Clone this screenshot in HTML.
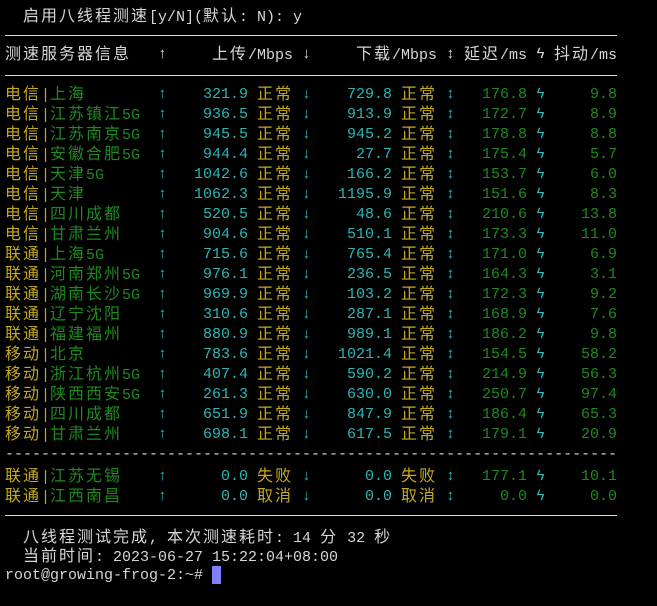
<!DOCTYPE html>
<html><head><meta charset="utf-8"><style>
html,body{margin:0;padding:0;background:#000;}
body{width:657px;height:606px;position:relative;overflow:hidden;font-family:"Liberation Mono","DejaVu Sans Mono","Noto Sans CJK SC",monospace;font-size:15px;color:#d6d6d6;}
.l{position:absolute;left:0;height:20px;line-height:20px;width:657px;white-space:pre;}
.l span{position:absolute;top:2px;}
.l span.z{top:-1px}
.l span.n0,.l span.m{top:-1px}
.z{font-family:"Noto Sans CJK SC","WenQuanYi Zen Hei",sans-serif;font-size:16px;letter-spacing:2px;}
.l span.in{position:static;}
.y{color:#c4aa1c}.g{color:#1e8a1e}.c{color:#2cb6b6}
.n0{left:5px}
.a1{left:158px}.u{left:167px;width:81px;text-align:right}.s1{left:257px}
.a2{left:302px}.d{left:311px;width:81px;text-align:right}.s2{left:401px}
.a3{left:446px}.la{left:455px;width:72px;text-align:right}.a4{left:536px}.j{left:545px;width:72px;text-align:right}
.rule{position:absolute;left:5px;width:612px;height:1px;background:#d8d8d8;}
</style></head><body>
<div class="l" style="top:5px"><span class="m" style="left:23px"><span class="in z">启用八线程测速</span>[y/N](<span class="in z">默认</span>: N): y</span></div>
<div class="rule" style="top:35px"></div>
<div class="l" style="top:43px">
<span class="n0 z">测速服务器信息</span><span class="a1">↑</span>
<span class="m" style="left:212px"><span class="in z">上传</span>/Mbps</span><span class="a2">↓</span>
<span class="m" style="left:356px"><span class="in z">下载</span>/Mbps</span><span class="a3">↕</span>
<span class="m" style="left:464px"><span class="in z">延迟</span>/ms</span><span class="a4">ϟ</span>
<span class="m" style="left:554px"><span class="in z">抖动</span>/ms</span></div>
<div class="rule" style="top:75px"></div>

<div class="l" style="top:83px"><span class="n0"><span class="in z y">电信</span><span class="in y">|</span><span class="in z g">上海</span></span><span class="a1 c">↑</span><span class="u c">321.9</span><span class="s1 z y">正常</span><span class="a2 c">↓</span><span class="d c">729.8</span><span class="s2 z y">正常</span><span class="a3 c">↕</span><span class="la g">176.8</span><span class="a4 c">ϟ</span><span class="j g">9.8</span></div>
<div class="l" style="top:103px"><span class="n0"><span class="in z y">电信</span><span class="in y">|</span><span class="in z g">江苏镇江</span><span class="in g">5G</span></span><span class="a1 c">↑</span><span class="u c">936.5</span><span class="s1 z y">正常</span><span class="a2 c">↓</span><span class="d c">913.9</span><span class="s2 z y">正常</span><span class="a3 c">↕</span><span class="la g">172.7</span><span class="a4 c">ϟ</span><span class="j g">8.9</span></div>
<div class="l" style="top:123px"><span class="n0"><span class="in z y">电信</span><span class="in y">|</span><span class="in z g">江苏南京</span><span class="in g">5G</span></span><span class="a1 c">↑</span><span class="u c">945.5</span><span class="s1 z y">正常</span><span class="a2 c">↓</span><span class="d c">945.2</span><span class="s2 z y">正常</span><span class="a3 c">↕</span><span class="la g">178.8</span><span class="a4 c">ϟ</span><span class="j g">8.8</span></div>
<div class="l" style="top:143px"><span class="n0"><span class="in z y">电信</span><span class="in y">|</span><span class="in z g">安徽合肥</span><span class="in g">5G</span></span><span class="a1 c">↑</span><span class="u c">944.4</span><span class="s1 z y">正常</span><span class="a2 c">↓</span><span class="d c">27.7</span><span class="s2 z y">正常</span><span class="a3 c">↕</span><span class="la g">175.4</span><span class="a4 c">ϟ</span><span class="j g">5.7</span></div>
<div class="l" style="top:163px"><span class="n0"><span class="in z y">电信</span><span class="in y">|</span><span class="in z g">天津</span><span class="in g">5G</span></span><span class="a1 c">↑</span><span class="u c">1042.6</span><span class="s1 z y">正常</span><span class="a2 c">↓</span><span class="d c">166.2</span><span class="s2 z y">正常</span><span class="a3 c">↕</span><span class="la g">153.7</span><span class="a4 c">ϟ</span><span class="j g">6.0</span></div>
<div class="l" style="top:183px"><span class="n0"><span class="in z y">电信</span><span class="in y">|</span><span class="in z g">天津</span></span><span class="a1 c">↑</span><span class="u c">1062.3</span><span class="s1 z y">正常</span><span class="a2 c">↓</span><span class="d c">1195.9</span><span class="s2 z y">正常</span><span class="a3 c">↕</span><span class="la g">151.6</span><span class="a4 c">ϟ</span><span class="j g">8.3</span></div>
<div class="l" style="top:203px"><span class="n0"><span class="in z y">电信</span><span class="in y">|</span><span class="in z g">四川成都</span></span><span class="a1 c">↑</span><span class="u c">520.5</span><span class="s1 z y">正常</span><span class="a2 c">↓</span><span class="d c">48.6</span><span class="s2 z y">正常</span><span class="a3 c">↕</span><span class="la g">210.6</span><span class="a4 c">ϟ</span><span class="j g">13.8</span></div>
<div class="l" style="top:223px"><span class="n0"><span class="in z y">电信</span><span class="in y">|</span><span class="in z g">甘肃兰州</span></span><span class="a1 c">↑</span><span class="u c">904.6</span><span class="s1 z y">正常</span><span class="a2 c">↓</span><span class="d c">510.1</span><span class="s2 z y">正常</span><span class="a3 c">↕</span><span class="la g">173.3</span><span class="a4 c">ϟ</span><span class="j g">11.0</span></div>
<div class="l" style="top:243px"><span class="n0"><span class="in z y">联通</span><span class="in y">|</span><span class="in z g">上海</span><span class="in g">5G</span></span><span class="a1 c">↑</span><span class="u c">715.6</span><span class="s1 z y">正常</span><span class="a2 c">↓</span><span class="d c">765.4</span><span class="s2 z y">正常</span><span class="a3 c">↕</span><span class="la g">171.0</span><span class="a4 c">ϟ</span><span class="j g">6.9</span></div>
<div class="l" style="top:263px"><span class="n0"><span class="in z y">联通</span><span class="in y">|</span><span class="in z g">河南郑州</span><span class="in g">5G</span></span><span class="a1 c">↑</span><span class="u c">976.1</span><span class="s1 z y">正常</span><span class="a2 c">↓</span><span class="d c">236.5</span><span class="s2 z y">正常</span><span class="a3 c">↕</span><span class="la g">164.3</span><span class="a4 c">ϟ</span><span class="j g">3.1</span></div>
<div class="l" style="top:283px"><span class="n0"><span class="in z y">联通</span><span class="in y">|</span><span class="in z g">湖南长沙</span><span class="in g">5G</span></span><span class="a1 c">↑</span><span class="u c">969.9</span><span class="s1 z y">正常</span><span class="a2 c">↓</span><span class="d c">103.2</span><span class="s2 z y">正常</span><span class="a3 c">↕</span><span class="la g">172.3</span><span class="a4 c">ϟ</span><span class="j g">9.2</span></div>
<div class="l" style="top:303px"><span class="n0"><span class="in z y">联通</span><span class="in y">|</span><span class="in z g">辽宁沈阳</span></span><span class="a1 c">↑</span><span class="u c">310.6</span><span class="s1 z y">正常</span><span class="a2 c">↓</span><span class="d c">287.1</span><span class="s2 z y">正常</span><span class="a3 c">↕</span><span class="la g">168.9</span><span class="a4 c">ϟ</span><span class="j g">7.6</span></div>
<div class="l" style="top:323px"><span class="n0"><span class="in z y">联通</span><span class="in y">|</span><span class="in z g">福建福州</span></span><span class="a1 c">↑</span><span class="u c">880.9</span><span class="s1 z y">正常</span><span class="a2 c">↓</span><span class="d c">989.1</span><span class="s2 z y">正常</span><span class="a3 c">↕</span><span class="la g">186.2</span><span class="a4 c">ϟ</span><span class="j g">9.8</span></div>
<div class="l" style="top:343px"><span class="n0"><span class="in z y">移动</span><span class="in y">|</span><span class="in z g">北京</span></span><span class="a1 c">↑</span><span class="u c">783.6</span><span class="s1 z y">正常</span><span class="a2 c">↓</span><span class="d c">1021.4</span><span class="s2 z y">正常</span><span class="a3 c">↕</span><span class="la g">154.5</span><span class="a4 c">ϟ</span><span class="j g">58.2</span></div>
<div class="l" style="top:363px"><span class="n0"><span class="in z y">移动</span><span class="in y">|</span><span class="in z g">浙江杭州</span><span class="in g">5G</span></span><span class="a1 c">↑</span><span class="u c">407.4</span><span class="s1 z y">正常</span><span class="a2 c">↓</span><span class="d c">590.2</span><span class="s2 z y">正常</span><span class="a3 c">↕</span><span class="la g">214.9</span><span class="a4 c">ϟ</span><span class="j g">56.3</span></div>
<div class="l" style="top:383px"><span class="n0"><span class="in z y">移动</span><span class="in y">|</span><span class="in z g">陕西西安</span><span class="in g">5G</span></span><span class="a1 c">↑</span><span class="u c">261.3</span><span class="s1 z y">正常</span><span class="a2 c">↓</span><span class="d c">630.0</span><span class="s2 z y">正常</span><span class="a3 c">↕</span><span class="la g">250.7</span><span class="a4 c">ϟ</span><span class="j g">97.4</span></div>
<div class="l" style="top:403px"><span class="n0"><span class="in z y">移动</span><span class="in y">|</span><span class="in z g">四川成都</span></span><span class="a1 c">↑</span><span class="u c">651.9</span><span class="s1 z y">正常</span><span class="a2 c">↓</span><span class="d c">847.9</span><span class="s2 z y">正常</span><span class="a3 c">↕</span><span class="la g">186.4</span><span class="a4 c">ϟ</span><span class="j g">65.3</span></div>
<div class="l" style="top:423px"><span class="n0"><span class="in z y">移动</span><span class="in y">|</span><span class="in z g">甘肃兰州</span></span><span class="a1 c">↑</span><span class="u c">698.1</span><span class="s1 z y">正常</span><span class="a2 c">↓</span><span class="d c">617.5</span><span class="s2 z y">正常</span><span class="a3 c">↕</span><span class="la g">179.1</span><span class="a4 c">ϟ</span><span class="j g">20.9</span></div>

<div class="l" style="top:445px"><span style="left:5px;top:0">--------------------------------------------------------------------</span></div>

<div class="l" style="top:465px"><span class="n0"><span class="in z y">联通</span><span class="in y">|</span><span class="in z g">江苏无锡</span></span><span class="a1 c">↑</span><span class="u c">0.0</span><span class="s1 z y">失败</span><span class="a2 c">↓</span><span class="d c">0.0</span><span class="s2 z y">失败</span><span class="a3 c">↕</span><span class="la g">177.1</span><span class="a4 c">ϟ</span><span class="j g">10.1</span></div>
<div class="l" style="top:485px"><span class="n0"><span class="in z y">联通</span><span class="in y">|</span><span class="in z g">江西南昌</span></span><span class="a1 c">↑</span><span class="u c">0.0</span><span class="s1 z y">取消</span><span class="a2 c">↓</span><span class="d c">0.0</span><span class="s2 z y">取消</span><span class="a3 c">↕</span><span class="la g">0.0</span><span class="a4 c">ϟ</span><span class="j g">0.0</span></div>
<div class="rule" style="top:515px"></div>

<div class="l" style="top:526px"><span class="m" style="left:23px"><span class="in z">八线程测试完成</span>, <span class="in z">本次测速耗时</span>: 14 <span class="in z">分</span> 32 <span class="in z">秒</span></span></div>
<div class="l" style="top:545px"><span class="m" style="left:23px"><span class="in z">当前时间</span>: 2023-06-27 15:22:04+08:00</span></div>
<div class="l" style="top:565px"><span style="left:5px;top:1px">root@growing-frog-2:~#</span></div>
<div style="position:absolute;left:212px;top:566px;width:9px;height:18px;background:#8080ff"></div>
</body></html>
